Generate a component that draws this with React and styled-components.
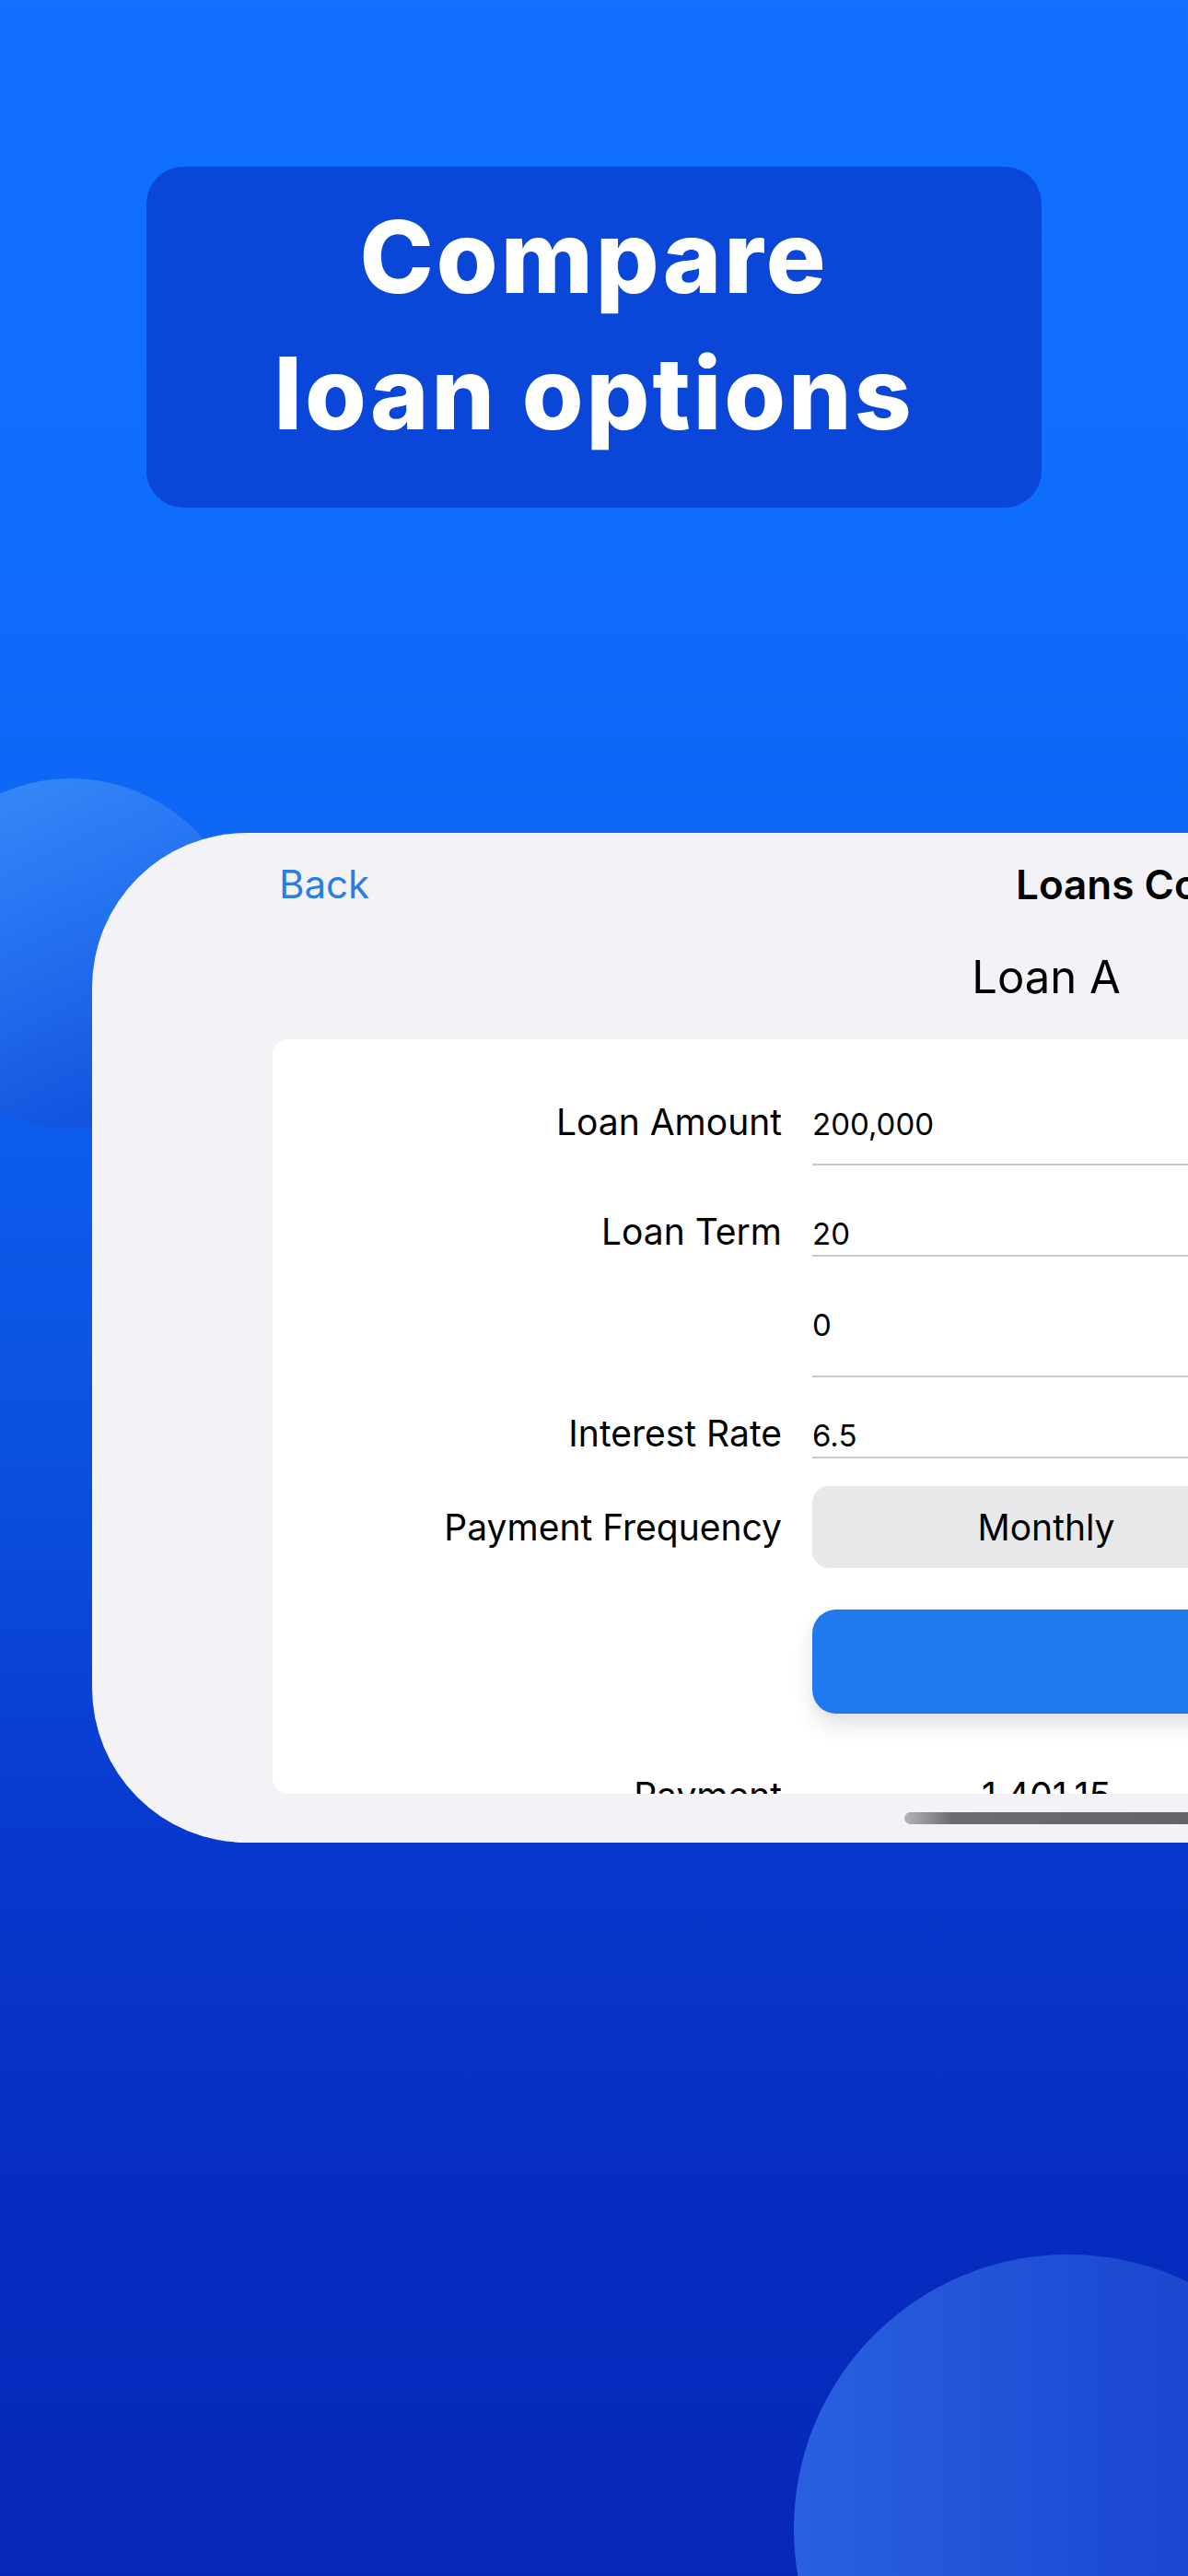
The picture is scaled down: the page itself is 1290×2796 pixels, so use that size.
import styled, { createGlobalStyle } from 'styled-components';

const GlobalStyle = createGlobalStyle`
  html, body {
    margin: 0;
    padding: 0;
    overflow: hidden;
  }
  body {
    font-family: Inter, "Liberation Sans", sans-serif;
  }
`;

const Page = styled.div`
  position: relative;
  width: 1290px;
  height: 2796px;
  overflow: hidden;
  padding-top: 181px;
  box-sizing: border-box;
  background: linear-gradient(
    180deg,
    #1071fe 0%,
    #0f6dfc 20%,
    #0d63f1 38%,
    #0b52e2 55%,
    #0838cc 72%,
    #062dc0 85%,
    #0628ba 100%
  );
`;

const Blob = styled.div`
  position: absolute;
  left: ${(p) => p.$x - p.$r}px;
  top: ${(p) => p.$y - p.$r}px;
  width: ${(p) => p.$r * 2}px;
  height: ${(p) => p.$r * 2}px;
  border-radius: 50%;
  background: ${(p) => p.$fill};
`;

const TitleBox = styled.div`
  position: relative;
  z-index: 1;
  margin: 0 159px;
  height: 370px;
  box-sizing: border-box;
  padding-top: 24px;
  border-radius: 40px;
  background-color: #0a46d8;
  text-align: center;
`;

const Title = styled.h1`
  margin: 0;
  font-family: Inter, "Liberation Sans", sans-serif;
  font-size: 108px;
  line-height: 148px;
  font-weight: 800;
  letter-spacing: 3px;
  color: #ffffff;
`;

const Device = styled.div`
  position: relative;
  z-index: 1;
  margin-top: 353px;
  margin-left: 100px;
  width: 1500px;
  height: 1096px;
  box-sizing: border-box;
  padding: 31px 0 20px 196px;
  background-color: #f2f2f7;
  border-radius: 168px 0 0 168px;
  overflow: hidden;
`;

const NavBar = styled.div`
  display: grid;
  grid-template-columns: 807px auto;
  height: 50px;
  font-size: 42px;
  line-height: 50px;
  white-space: nowrap;
`;

const BackLink = styled.a`
  padding-left: 7px;
  color: #2a7de1;
  text-decoration: none;
`;

const NavTitle = styled.span`
  font-size: 44px;
  font-weight: 600;
  color: #000000;
`;

const Columns = styled.div`
  display: grid;
  grid-template-columns: 553px 508px;
  column-gap: 33px;
  align-items: ${(p) => p.$align || 'baseline'};
  margin-top: ${(p) => p.$top || 0}px;
`;

const SectionTitle = styled.h2`
  grid-column: 2;
  margin: 0;
  font-size: 49px;
  line-height: 60px;
  font-weight: 400;
  text-align: center;
  color: #000000;
`;

const Card = styled.div`
  margin-top: 37px;
  width: 1300px;
  height: 819px;
  box-sizing: border-box;
  padding-top: 69px;
  border-radius: 16px 0 0 16px;
  background-color: #ffffff;
  overflow: hidden;
`;

const Label = styled.div`
  font-size: 39px;
  line-height: 40px;
  text-align: right;
  color: #000000;
  white-space: nowrap;
`;

const Field = styled.div`
  font-size: 33px;
  line-height: 46px;
  padding-bottom: ${(p) => p.$gap}px;
  border-bottom: 2px solid #c9c9cd;
  color: #000000;
`;

const Picker = styled.div`
  height: 89px;
  display: flex;
  align-items: center;
  justify-content: center;
  border-radius: 18px;
  background-color: #e8e8ea;
  font-size: 39px;
  color: #000000;
`;

const Button = styled.div`
  grid-column: 2;
  height: 113px;
  border-radius: 26px;
  background-color: #2079ef;
  box-shadow: 0 12px 22px rgba(0, 0, 0, 0.12);
`;

const Result = styled.div`
  font-size: 39px;
  line-height: 40px;
  text-align: center;
  color: #000000;
`;

const HomeBar = styled.div`
  margin-top: 20px;
  margin-left: 686px;
  width: 520px;
  height: 13px;
  border-radius: 7px;
  background: linear-gradient(90deg, #b4b4b8 0%, #6c6c70 10%, #5e5e62 100%);
`;

const fields = [
  { label: 'Loan Amount', value: '200,000', gap: 20, top: 0 },
  { label: 'Loan Term', value: '20', gap: 0, top: 51 },
  { label: '', value: '0', gap: 32, top: 51 },
  { label: 'Interest Rate', value: '6.5', gap: 0, top: 40 },
];

const App = () => (
  <Page>
    <GlobalStyle />
    <Blob $x={77} $y={1035} $r={190} $fill='linear-gradient(155deg, #3d8dfb 0%, #2471f0 45%, #0c47d8 100%)' />
    <Blob $x={1160} $y={2745} $r={298} $fill='linear-gradient(90deg, #2a60e0 0%, #1c4bd2 60%, #1741c8 100%)' />
    <TitleBox>
      <Title>
        Compare
        <br />
        loan options
      </Title>
    </TitleBox>
    <Device>
      <NavBar>
        <BackLink href='#'>Back</BackLink>
        <NavTitle>Loans Comparison</NavTitle>
      </NavBar>
      <Columns $top={46}>
        <SectionTitle>Loan A</SectionTitle>
      </Columns>
      <Card>
        {fields.map((f) => (
          <Columns key={f.label + f.value} $top={f.top}>
            <Label>{f.label}</Label>
            <Field $gap={f.gap}>{f.value}</Field>
          </Columns>
        ))}
        <Columns $top={30} $align='center'>
          <Label>Payment Frequency</Label>
          <Picker>Monthly</Picker>
        </Columns>
        <Columns $top={45}>
          <Button />
        </Columns>
        <Columns $top={69}>
          <Label>Payment</Label>
          <Result>1,401.15</Result>
        </Columns>
      </Card>
      <HomeBar />
    </Device>
  </Page>
);

export default App;
